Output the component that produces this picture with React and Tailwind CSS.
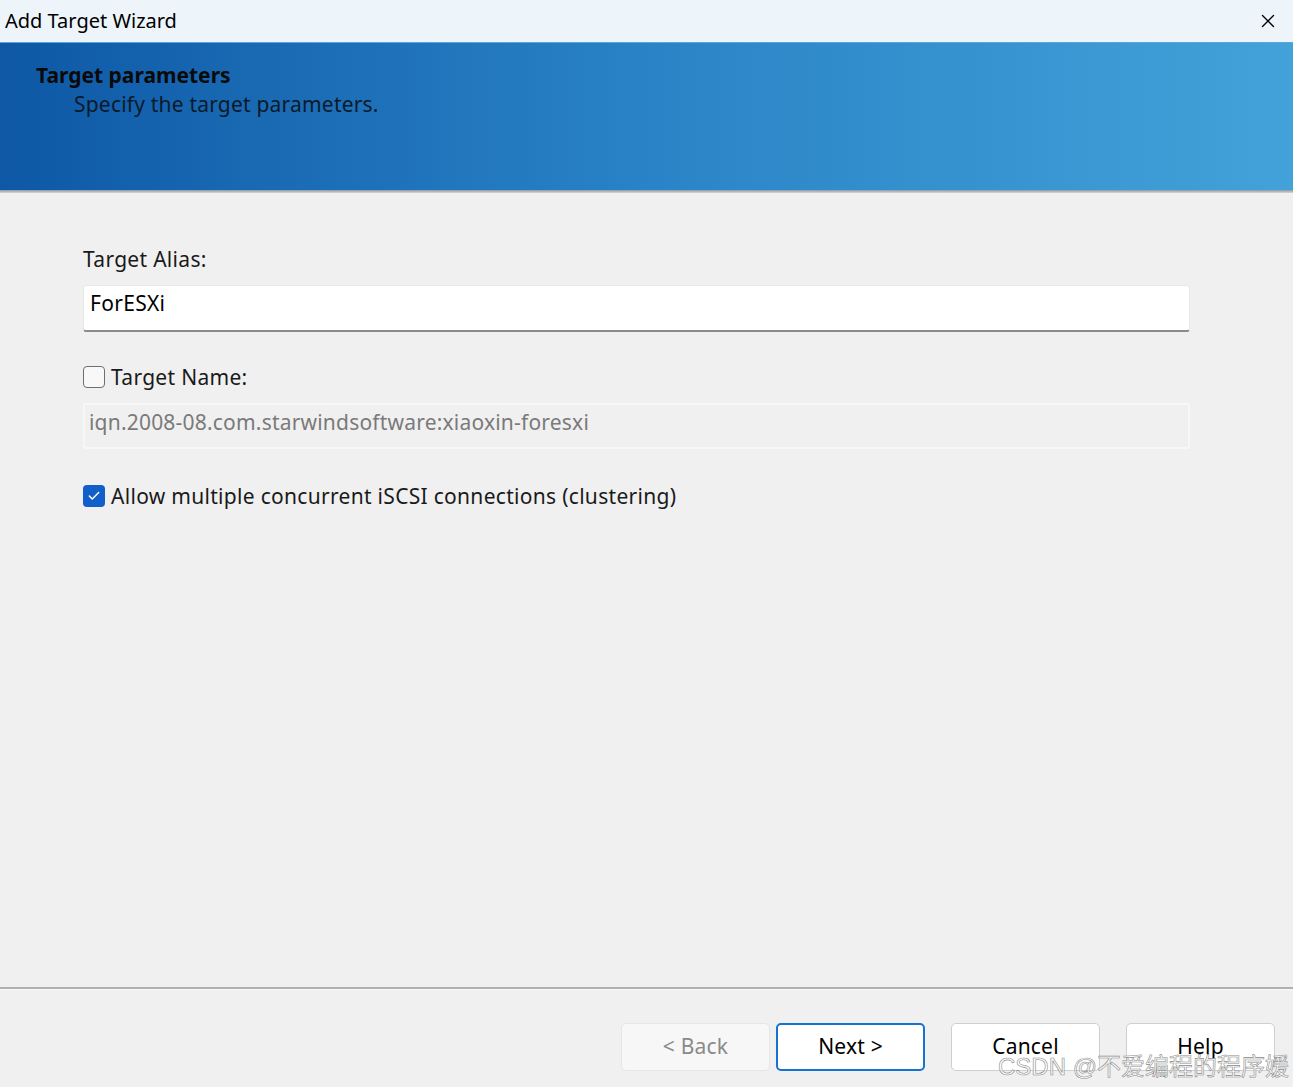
import { X, Check } from "lucide-react";

const font = "font-['Noto_Sans','Open_Sans',sans-serif]";

function Checkbox({ checked }) {
  if (checked) {
    return (
      <span className="flex h-[22px] w-[22px] shrink-0 items-center justify-center rounded-[4px] bg-[#1160c9]">
        <Check size={14} strokeWidth={2.5} className="text-white" />
      </span>
    );
  }
  return (
    <span className="h-[22px] w-[22px] shrink-0 rounded-[4px] border-[1.5px] border-[#6e6e6e] bg-[#f8f8f8]" />
  );
}

function Button({ children, variant }) {
  const styles = {
    disabled: "border-[#e6e6e6] bg-[#f7f7f7] text-[#8a8a8a]",
    primary: "border-[#1473d0] border-2 bg-white text-black",
    normal: "border-[#cfcfcf] bg-white text-black",
  };
  return (
    <button
      className={`flex h-[48px] w-[149px] items-center justify-center rounded-[5px] border text-[21px] tracking-[0.2px] ${styles[variant]}`}
    >
      {children}
    </button>
  );
}

export default function App() {
  return (
    <div className={`relative flex h-[1087px] w-[1293px] flex-col overflow-hidden bg-[#f0f0f0] ${font}`}>
      {/* Title bar */}
      <div className="flex h-[42px] shrink-0 items-center justify-between bg-[#eef5fa] pl-[5px] pr-[14px]">
        <span className="text-[20px] leading-none text-black">Add Target Wizard</span>
        <X size={22} strokeWidth={1.5} className="text-black" />
      </div>

      {/* Header band */}
      <div className="h-[148px] shrink-0 border-t border-[#5aa5dc] bg-gradient-to-r from-[#0e58a6] via-[#2a83c6] to-[#43a2d9] pl-[36px] pt-[18px]">
        <div className="text-[21px] font-bold leading-[28px] text-[#0a0a0a]">Target parameters</div>
        <div className="pl-[38px] text-[21px] leading-[30px] tracking-[0.2px] text-[#0b1a2a]">Specify the target parameters.</div>
      </div>
      <div className="h-[3px] shrink-0 bg-gradient-to-b from-[#8f9aa3] to-[#d5d5d5]" />

      {/* Body */}
      <div className="flex flex-1 flex-col pl-[83px] pr-[103px] pt-[52px] text-[21px] tracking-[0.3px] text-[#1a1a1a]">
        <label className="leading-[28px]">Target Alias:</label>
        <div className="mt-[12px] h-[47px] rounded-[3px] border border-[#e8e8e8] border-b-2 border-b-[#8a8a8a] bg-white px-[6px] pt-[3px] leading-[28px] text-black">
          ForESXi
        </div>

        <div className="mt-[31px] flex items-center gap-[6px] leading-[28px]">
          <Checkbox checked={false} />
          <span>Target Name:</span>
        </div>
        <div className="mt-[12px] h-[46px] rounded-[3px] border-2 border-[#f7f7f7] bg-[#f0f0f0] px-[4px] pt-[3px] leading-[28px] tracking-[0.2px] text-[#7a7a7a]">
          iqn.2008-08.com.starwindsoftware:xiaoxin-foresxi
        </div>

        <div className="mt-[33px] flex items-center gap-[6px] leading-[28px]">
          <Checkbox checked />
          <span>Allow multiple concurrent iSCSI connections (clustering)</span>
        </div>
      </div>

      {/* Footer */}
      <div className="h-[2px] shrink-0 bg-[#b0b0b0]" />
      <div className="h-[1px] shrink-0 bg-[#fafafa]" />
      <div className="flex h-[97px] shrink-0 items-start justify-end pr-[18px] pt-[33px]">
        <div className="flex gap-[6px]">
          <Button variant="disabled">&lt; Back</Button>
          <Button variant="primary">Next &gt;</Button>
        </div>
        <div className="ml-[26px] flex gap-[26px]">
          <Button variant="normal">Cancel</Button>
          <Button variant="normal">Help</Button>
        </div>
      </div>

      {/* Watermark */}
      <div className="pointer-events-none absolute bottom-[8px] right-[4px] font-['Liberation_Sans','Noto_Sans_CJK_SC',sans-serif] text-[24px] leading-none text-white/80 [-webkit-text-stroke:0.6px_#8c8c8c]">
        CSDN @不爱编程的程序媛
      </div>
    </div>
  );
}
